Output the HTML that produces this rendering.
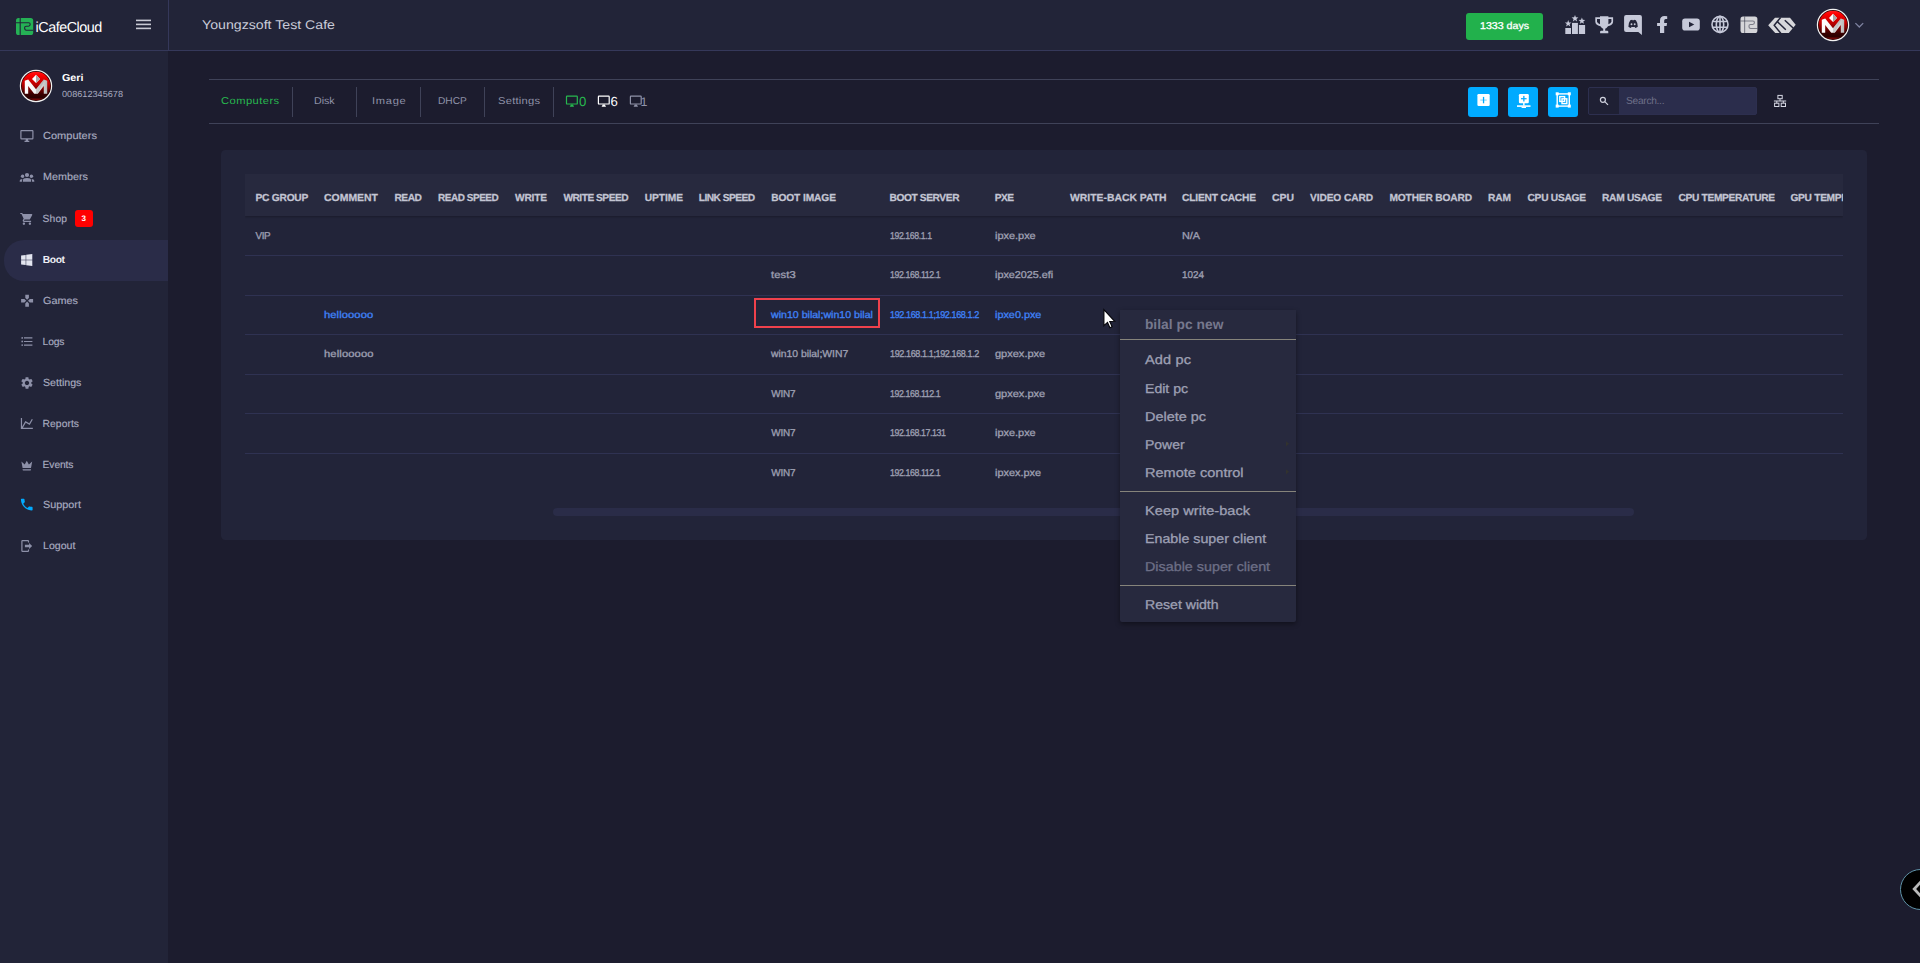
<!DOCTYPE html>
<html lang="en">
<head>
<meta charset="utf-8">
<title>iCafeCloud - Boot</title>
<style>
html,body{margin:0;padding:0;}
body{width:1920px;height:963px;overflow:hidden;background:#1c1c2e;font-family:"Liberation Sans",sans-serif;position:relative;}
.abs{position:absolute;}
.t{position:absolute;white-space:pre;text-rendering:geometricPrecision;height:20px;line-height:20px;font-family:"Liberation Sans",sans-serif;}
#header{position:absolute;left:0;top:0;width:1920px;height:50px;background:#222438;border-bottom:1px solid #35385a;}
#sidebar{position:absolute;left:0;top:51px;width:168px;height:912px;background:#222438;}
#hsep{position:absolute;left:168px;top:0;width:1px;height:50px;background:#35385a;}
#active{position:absolute;left:4px;top:240px;width:164px;height:41px;background:#2a2c48;border-radius:20px 0 0 20px;}
#days{position:absolute;left:1466px;top:13px;width:77px;height:27px;background:#22b14c;border-radius:3px;}
.badge{position:absolute;left:75px;top:210px;width:18px;height:17px;background:#ff0000;border-radius:3px;}
.hline{position:absolute;left:209px;width:1670px;height:1px;background:#3f4258;}
.vsep{position:absolute;top:87px;width:1px;height:30px;background:#3f4258;}
.cbtn{position:absolute;top:87px;width:30px;height:30px;background:#00aaff;border-radius:3px;}
#search{position:absolute;left:1588px;top:87px;width:169px;height:28px;border-radius:2px;background:#2b2d4c;overflow:hidden;box-sizing:border-box;border:1px solid #2d2f4f;}
#search .ic{position:absolute;left:0;top:0;width:30px;height:26px;background:#1f2034;}
#card{position:absolute;left:221px;top:150px;width:1646px;height:390px;background:#222439;border-radius:4.5px;}
#tablewrap{position:absolute;left:245px;top:174px;width:1598px;height:320px;overflow:hidden;}
#thead{position:absolute;left:0;top:0;width:1598px;height:42px;background:#27293e;box-shadow:0 1px 2px rgba(0,0,0,.25);}
.rl{position:absolute;left:0;width:1598px;height:1px;background:#2f3252;}
#selbox{position:absolute;left:754px;top:298px;width:126px;height:30px;box-sizing:border-box;border:2px solid #ef414c;}
#scroll{position:absolute;left:553px;top:508px;width:1081px;height:8px;border-radius:4px;background:#2a2c48;}
#menu{position:absolute;left:1120px;top:310px;width:176px;height:312px;background:#27293e;box-shadow:0 2px 5px rgba(0,0,0,.42);border-radius:0 0 2px 2px;}
.msep{position:absolute;left:0;width:176px;height:1px;background:#86847b;}
#fab{position:absolute;left:1899.5px;top:868.6px;width:41px;height:41px;border-radius:21px;background:#000;box-sizing:border-box;border:1px solid #5f93a8;}
svg{position:absolute;overflow:visible;}
</style>
</head>
<body>
<div id="header"></div>
<div id="hsep"></div>
<div id="sidebar"></div>
<div id="active"></div>
<div id="days"></div>
<div class="badge"></div>

<div class="hline" style="top:79px"></div>
<div class="hline" style="top:123px"></div>
<div class="vsep" style="left:292px"></div>
<div class="vsep" style="left:356px"></div>
<div class="vsep" style="left:420px"></div>
<div class="vsep" style="left:484px"></div>
<div class="vsep" style="left:553px"></div>
<div class="cbtn" style="left:1468px"></div>
<div class="cbtn" style="left:1508px"></div>
<div class="cbtn" style="left:1548px"></div>
<div id="search"><div class="ic"></div></div>
<div id="card"></div>
<div id="tablewrap">
 <div id="thead">
<div class="t" style="left:10.50px;top:15.00px;font-size:10.2px;font-weight:700;color:#c3c5d3;letter-spacing:-0.221px;-webkit-text-stroke:0.25px currentColor;">PC GROUP</div>
<div class="t" style="left:79.40px;top:15.00px;font-size:10.2px;font-weight:700;color:#c3c5d3;letter-spacing:0.000px;transform:scaleX(1.0258);transform-origin:0 50%;-webkit-text-stroke:0.25px currentColor;">COMMENT</div>
<div class="t" style="left:149.40px;top:15.00px;font-size:10.2px;font-weight:700;color:#c3c5d3;letter-spacing:-0.425px;-webkit-text-stroke:0.25px currentColor;">READ</div>
<div class="t" style="left:193.00px;top:15.00px;font-size:10.2px;font-weight:700;color:#c3c5d3;letter-spacing:-0.450px;transform:scaleX(0.9761);transform-origin:0 50%;-webkit-text-stroke:0.25px currentColor;">READ SPEED</div>
<div class="t" style="left:270.00px;top:15.00px;font-size:10.2px;font-weight:700;color:#c3c5d3;letter-spacing:-0.207px;-webkit-text-stroke:0.25px currentColor;">WRITE</div>
<div class="t" style="left:318.40px;top:15.00px;font-size:10.2px;font-weight:700;color:#c3c5d3;letter-spacing:-0.500px;-webkit-text-stroke:0.25px currentColor;">WRITE SPEED</div>
<div class="t" style="left:399.70px;top:15.00px;font-size:10.2px;font-weight:700;color:#c3c5d3;letter-spacing:-0.040px;-webkit-text-stroke:0.25px currentColor;">UPTIME</div>
<div class="t" style="left:453.70px;top:15.00px;font-size:10.2px;font-weight:700;color:#c3c5d3;letter-spacing:-0.516px;-webkit-text-stroke:0.25px currentColor;">LINK SPEED</div>
<div class="t" style="left:526.20px;top:15.00px;font-size:10.2px;font-weight:700;color:#c3c5d3;letter-spacing:-0.095px;-webkit-text-stroke:0.25px currentColor;">BOOT IMAGE</div>
<div class="t" style="left:644.50px;top:15.00px;font-size:10.2px;font-weight:700;color:#c3c5d3;letter-spacing:-0.397px;-webkit-text-stroke:0.25px currentColor;">BOOT SERVER</div>
<div class="t" style="left:749.80px;top:15.00px;font-size:10.2px;font-weight:700;color:#c3c5d3;letter-spacing:-0.595px;-webkit-text-stroke:0.25px currentColor;">PXE</div>
<div class="t" style="left:824.50px;top:15.00px;font-size:10.2px;font-weight:700;color:#c3c5d3;letter-spacing:0.000px;transform:scaleX(1.0190);transform-origin:0 50%;-webkit-text-stroke:0.25px currentColor;">WRITE-BACK PATH</div>
<div class="t" style="left:937.00px;top:15.00px;font-size:10.2px;font-weight:700;color:#c3c5d3;letter-spacing:-0.168px;-webkit-text-stroke:0.25px currentColor;">CLIENT CACHE</div>
<div class="t" style="left:1027.00px;top:15.00px;font-size:10.2px;font-weight:700;color:#c3c5d3;letter-spacing:0.000px;transform:scaleX(1.0225);transform-origin:0 50%;-webkit-text-stroke:0.25px currentColor;">CPU</div>
<div class="t" style="left:1065.00px;top:15.00px;font-size:10.2px;font-weight:700;color:#c3c5d3;letter-spacing:-0.108px;-webkit-text-stroke:0.25px currentColor;">VIDEO CARD</div>
<div class="t" style="left:1144.50px;top:15.00px;font-size:10.2px;font-weight:700;color:#c3c5d3;letter-spacing:-0.166px;-webkit-text-stroke:0.25px currentColor;">MOTHER BOARD</div>
<div class="t" style="left:1243.00px;top:15.00px;font-size:10.2px;font-weight:700;color:#c3c5d3;letter-spacing:-0.102px;-webkit-text-stroke:0.25px currentColor;">RAM</div>
<div class="t" style="left:1282.50px;top:15.00px;font-size:10.2px;font-weight:700;color:#c3c5d3;letter-spacing:-0.260px;-webkit-text-stroke:0.25px currentColor;">CPU USAGE</div>
<div class="t" style="left:1357.00px;top:15.00px;font-size:10.2px;font-weight:700;color:#c3c5d3;letter-spacing:-0.283px;-webkit-text-stroke:0.25px currentColor;">RAM USAGE</div>
<div class="t" style="left:1433.50px;top:15.00px;font-size:10.2px;font-weight:700;color:#c3c5d3;letter-spacing:-0.330px;-webkit-text-stroke:0.25px currentColor;">CPU TEMPERATURE</div>
<div class="t" style="left:1545.50px;top:15.00px;font-size:10.2px;font-weight:700;color:#c3c5d3;letter-spacing:-0.300px;-webkit-text-stroke:0.25px currentColor;">GPU TEMPERATURE</div>
 </div>
 <div class="rl" style="top:81px"></div>
 <div class="rl" style="top:121px"></div>
 <div class="rl" style="top:160px"></div>
 <div class="rl" style="top:200px"></div>
 <div class="rl" style="top:239px"></div>
 <div class="rl" style="top:279px"></div>
<div class="t" style="left:10.50px;top:53.00px;font-size:9.9px;font-weight:400;color:#9c9eb0;letter-spacing:-0.461px;-webkit-text-stroke:0.35px currentColor;">VIP</div>
<div class="t" style="left:644.50px;top:53.00px;font-size:9.9px;font-weight:400;color:#9c9eb0;letter-spacing:-0.450px;transform:scaleX(0.8810);transform-origin:0 50%;-webkit-text-stroke:0.35px currentColor;">192.168.1.1</div>
<div class="t" style="left:749.80px;top:53.00px;font-size:9.9px;font-weight:400;color:#9c9eb0;letter-spacing:0.000px;transform:scaleX(1.1065);transform-origin:0 50%;-webkit-text-stroke:0.35px currentColor;">ipxe.pxe</div>
<div class="t" style="left:937.00px;top:53.00px;font-size:9.9px;font-weight:400;color:#9c9eb0;letter-spacing:0.000px;transform:scaleX(1.0930);transform-origin:0 50%;-webkit-text-stroke:0.35px currentColor;">N/A</div>
<div class="t" style="left:526.30px;top:92.00px;font-size:9.9px;font-weight:400;color:#9c9eb0;letter-spacing:0.109px;transform:scaleX(1.1300);transform-origin:0 50%;-webkit-text-stroke:0.35px currentColor;">test3</div>
<div class="t" style="left:644.50px;top:92.00px;font-size:9.9px;font-weight:400;color:#9c9eb0;letter-spacing:-0.450px;transform:scaleX(0.8891);transform-origin:0 50%;-webkit-text-stroke:0.35px currentColor;">192.168.112.1</div>
<div class="t" style="left:749.80px;top:92.00px;font-size:9.9px;font-weight:400;color:#9c9eb0;letter-spacing:0.000px;transform:scaleX(1.0926);transform-origin:0 50%;-webkit-text-stroke:0.35px currentColor;">ipxe2025.efi</div>
<div class="t" style="left:937.00px;top:92.00px;font-size:9.9px;font-weight:400;color:#9c9eb0;letter-spacing:0.010px;-webkit-text-stroke:0.35px currentColor;">1024</div>
<div class="t" style="left:79.30px;top:132.00px;font-size:9.9px;font-weight:400;color:#3f80f4;letter-spacing:0.087px;transform:scaleX(1.1300);transform-origin:0 50%;-webkit-text-stroke:0.35px currentColor;">hellooooo</div>
<div class="t" style="left:526.30px;top:132.00px;font-size:9.9px;font-weight:400;color:#3f80f4;letter-spacing:0.000px;transform:scaleX(1.0730);transform-origin:0 50%;-webkit-text-stroke:0.35px currentColor;">win10 bilal;win10 bilal</div>
<div class="t" style="left:644.50px;top:132.00px;font-size:9.9px;font-weight:400;color:#3f80f4;letter-spacing:-0.450px;transform:scaleX(0.9189);transform-origin:0 50%;-webkit-text-stroke:0.35px currentColor;">192.168.1.1;192.168.1.2</div>
<div class="t" style="left:749.80px;top:132.00px;font-size:9.9px;font-weight:400;color:#3f80f4;letter-spacing:0.000px;transform:scaleX(1.0974);transform-origin:0 50%;-webkit-text-stroke:0.35px currentColor;">ipxe0.pxe</div>
<div class="t" style="left:79.30px;top:171.00px;font-size:9.9px;font-weight:400;color:#9c9eb0;letter-spacing:0.120px;transform:scaleX(1.1300);transform-origin:0 50%;-webkit-text-stroke:0.35px currentColor;">hellooooo</div>
<div class="t" style="left:526.30px;top:171.00px;font-size:9.9px;font-weight:400;color:#9c9eb0;letter-spacing:-0.000px;transform:scaleX(1.0497);transform-origin:0 50%;-webkit-text-stroke:0.35px currentColor;">win10 bilal;WIN7</div>
<div class="t" style="left:644.50px;top:171.00px;font-size:9.9px;font-weight:400;color:#9c9eb0;letter-spacing:-0.450px;transform:scaleX(0.9189);transform-origin:0 50%;-webkit-text-stroke:0.35px currentColor;">192.168.1.1;192.168.1.2</div>
<div class="t" style="left:749.80px;top:171.00px;font-size:9.9px;font-weight:400;color:#9c9eb0;letter-spacing:0.000px;transform:scaleX(1.1148);transform-origin:0 50%;-webkit-text-stroke:0.35px currentColor;">gpxex.pxe</div>
<div class="t" style="left:526.30px;top:211.00px;font-size:9.9px;font-weight:400;color:#9c9eb0;letter-spacing:-0.162px;-webkit-text-stroke:0.35px currentColor;">WIN7</div>
<div class="t" style="left:644.50px;top:211.00px;font-size:9.9px;font-weight:400;color:#9c9eb0;letter-spacing:-0.450px;transform:scaleX(0.8891);transform-origin:0 50%;-webkit-text-stroke:0.35px currentColor;">192.168.112.1</div>
<div class="t" style="left:749.80px;top:211.00px;font-size:9.9px;font-weight:400;color:#9c9eb0;letter-spacing:0.000px;transform:scaleX(1.1148);transform-origin:0 50%;-webkit-text-stroke:0.35px currentColor;">gpxex.pxe</div>
<div class="t" style="left:526.30px;top:250.00px;font-size:9.9px;font-weight:400;color:#9c9eb0;letter-spacing:-0.162px;-webkit-text-stroke:0.35px currentColor;">WIN7</div>
<div class="t" style="left:644.50px;top:250.00px;font-size:9.9px;font-weight:400;color:#9c9eb0;letter-spacing:-0.450px;transform:scaleX(0.8916);transform-origin:0 50%;-webkit-text-stroke:0.35px currentColor;">192.168.17.131</div>
<div class="t" style="left:749.80px;top:250.00px;font-size:9.9px;font-weight:400;color:#9c9eb0;letter-spacing:0.000px;transform:scaleX(1.1065);transform-origin:0 50%;-webkit-text-stroke:0.35px currentColor;">ipxe.pxe</div>
<div class="t" style="left:526.30px;top:290.00px;font-size:9.9px;font-weight:400;color:#9c9eb0;letter-spacing:-0.162px;-webkit-text-stroke:0.35px currentColor;">WIN7</div>
<div class="t" style="left:644.50px;top:290.00px;font-size:9.9px;font-weight:400;color:#9c9eb0;letter-spacing:-0.450px;transform:scaleX(0.8891);transform-origin:0 50%;-webkit-text-stroke:0.35px currentColor;">192.168.112.1</div>
<div class="t" style="left:749.80px;top:290.00px;font-size:9.9px;font-weight:400;color:#9c9eb0;letter-spacing:0.000px;transform:scaleX(1.1026);transform-origin:0 50%;-webkit-text-stroke:0.35px currentColor;">ipxex.pxe</div>
</div>
<div id="selbox"></div>
<div id="scroll"></div>
<div class="t" style="left:201.50px;top:15.00px;font-size:12.6px;font-weight:400;color:#c9cbd8;letter-spacing:0.000px;transform:scaleX(1.1240);transform-origin:0 50%;">Youngzsoft Test Cafe</div>
<div class="t" style="left:1480.00px;top:17.00px;font-size:9.9px;font-weight:400;color:#ffffff;letter-spacing:0.000px;transform:scaleX(1.0751);transform-origin:0 50%;-webkit-text-stroke:0.3px currentColor;">1333 days</div>
<div class="t" style="left:35.60px;top:18.00px;font-size:14.4px;font-weight:400;color:#ffffff;letter-spacing:-0.511px;">iCafeCloud</div>
<div class="t" style="left:61.50px;top:69.00px;font-size:10.2px;font-weight:700;color:#ffffff;letter-spacing:0.000px;transform:scaleX(1.0544);transform-origin:0 50%;">Geri</div>
<div class="t" style="left:61.50px;top:84.00px;font-size:8.8px;font-weight:400;color:#a9acc0;letter-spacing:-0.000px;transform:scaleX(1.0389);transform-origin:0 50%;">008612345678</div>
<div class="t" style="left:42.60px;top:127.00px;font-size:10.3px;font-weight:400;color:#a9acc0;letter-spacing:0.000px;transform:scaleX(1.0703);transform-origin:0 50%;-webkit-text-stroke:0.15px currentColor;">Computers</div>
<div class="t" style="left:42.60px;top:168.00px;font-size:10.3px;font-weight:400;color:#a9acc0;letter-spacing:0.000px;transform:scaleX(1.0461);transform-origin:0 50%;-webkit-text-stroke:0.15px currentColor;">Members</div>
<div class="t" style="left:42.60px;top:210.00px;font-size:10.3px;font-weight:400;color:#a9acc0;letter-spacing:0.112px;-webkit-text-stroke:0.15px currentColor;">Shop</div>
<div class="t" style="left:42.70px;top:251.00px;font-size:10.3px;font-weight:700;color:#eeeff5;letter-spacing:-0.384px;">Boot</div>
<div class="t" style="left:42.60px;top:292.00px;font-size:10.3px;font-weight:400;color:#a9acc0;letter-spacing:0.000px;transform:scaleX(1.0511);transform-origin:0 50%;-webkit-text-stroke:0.15px currentColor;">Games</div>
<div class="t" style="left:42.60px;top:333.00px;font-size:10.3px;font-weight:400;color:#a9acc0;letter-spacing:-0.148px;-webkit-text-stroke:0.15px currentColor;">Logs</div>
<div class="t" style="left:42.60px;top:374.00px;font-size:10.3px;font-weight:400;color:#a9acc0;letter-spacing:0.000px;transform:scaleX(1.0317);transform-origin:0 50%;-webkit-text-stroke:0.15px currentColor;">Settings</div>
<div class="t" style="left:42.60px;top:415.00px;font-size:10.3px;font-weight:400;color:#a9acc0;letter-spacing:0.056px;-webkit-text-stroke:0.15px currentColor;">Reports</div>
<div class="t" style="left:42.60px;top:456.00px;font-size:10.3px;font-weight:400;color:#a9acc0;letter-spacing:-0.117px;-webkit-text-stroke:0.15px currentColor;">Events</div>
<div class="t" style="left:42.60px;top:496.00px;font-size:10.3px;font-weight:400;color:#a9acc0;letter-spacing:0.000px;transform:scaleX(1.0505);transform-origin:0 50%;-webkit-text-stroke:0.15px currentColor;">Support</div>
<div class="t" style="left:42.60px;top:537.00px;font-size:10.3px;font-weight:400;color:#a9acc0;letter-spacing:0.000px;transform:scaleX(1.0286);transform-origin:0 50%;-webkit-text-stroke:0.15px currentColor;">Logout</div>
<div class="t" style="left:81.60px;top:209.00px;font-size:8px;font-weight:700;color:#ffffff;letter-spacing:0.000px;">3</div>
<div class="t" style="left:221.00px;top:92.00px;font-size:9.9px;font-weight:400;color:#27b84f;letter-spacing:0.401px;transform:scaleX(1.1300);transform-origin:0 50%;">Computers</div>
<div class="t" style="left:314.30px;top:92.00px;font-size:9.9px;font-weight:400;color:#8f92a8;letter-spacing:0.000px;transform:scaleX(1.0779);transform-origin:0 50%;">Disk</div>
<div class="t" style="left:371.50px;top:92.00px;font-size:9.9px;font-weight:400;color:#8f92a8;letter-spacing:0.615px;transform:scaleX(1.1300);transform-origin:0 50%;">Image</div>
<div class="t" style="left:438.30px;top:92.00px;font-size:9.9px;font-weight:400;color:#8f92a8;letter-spacing:0.000px;transform:scaleX(1.0327);transform-origin:0 50%;">DHCP</div>
<div class="t" style="left:497.70px;top:92.00px;font-size:9.9px;font-weight:400;color:#8f92a8;letter-spacing:0.224px;transform:scaleX(1.1300);transform-origin:0 50%;">Settings</div>
<div class="t" style="left:579.00px;top:92.00px;font-size:13.2px;font-weight:400;color:#27b84f;letter-spacing:0.000px;">0</div>
<div class="t" style="left:610.60px;top:92.00px;font-size:13.2px;font-weight:400;color:#ffffff;letter-spacing:0.000px;">6</div>
<div class="t" style="left:640.60px;top:92.00px;font-size:12.5px;font-weight:400;color:#8f92a8;letter-spacing:0.000px;">1</div>
<div class="t" style="left:1626.00px;top:92.00px;font-size:10.2px;font-weight:400;color:#6e7089;letter-spacing:-0.285px;">Search...</div>
<svg width="1920" height="963" viewBox="0 0 1920 963" style="left:0;top:0;pointer-events:none"><g transform="translate(16.00 18.00) scale(1.0000)"><rect x="0" y="0" width="17.2" height="17" rx="2.6" fill="#25b155"/><g fill="none" stroke="#222438" stroke-width="1.1" stroke-opacity="1.0"><path d="M4.2 0V17"/><path d="M0 4.7H12.6Q14.2 4.7 14.2 6.3Q14.2 8.2 12.4 8.2H10.2Q8.6 8.2 8.6 9.8Q8.6 12.3 10.4 12.3H17.2"/></g></g>
<g fill="#c9cad4"><rect x="136" y="19.6" width="15" height="1.6"/><rect x="136" y="23.6" width="15" height="1.6"/><rect x="136" y="27.6" width="15" height="1.6"/></g>
<defs>
<linearGradient id="ball" x1="0" y1="0" x2="0" y2="1">
<stop offset="0" stop-color="#ff1a1a"/><stop offset="0.12" stop-color="#ff0000"/><stop offset="0.45" stop-color="#b80000"/><stop offset="0.78" stop-color="#3a0000"/><stop offset="0.9" stop-color="#2a0000"/><stop offset="1" stop-color="#8a0808"/>
</linearGradient>
<linearGradient id="silver" x1="0" y1="0" x2="1" y2="0">
<stop offset="0" stop-color="#ffffff"/><stop offset="0.5" stop-color="#f2f2f2"/><stop offset="1" stop-color="#b9b9b9"/>
</linearGradient>
</defs>
<g transform="translate(36 86)">
<circle r="15.6" fill="#2a0505" stroke="#f2f2f2" stroke-width="1.2"/>
<circle r="14.3" fill="url(#ball)"/>
<polygon points="-11.2,-5.2 -7.8,-6.5 0,3.3 7.8,-6.5 11.2,-5.2 11.2,7.7 7.8,7.7 7.8,0.1 1.8,7.7 -1.8,7.7 -7.8,0.1 -7.8,7.7 -11.2,7.7" fill="url(#silver)"/><polygon points="0,3.3 7.8,-6.5 8.6,-6.2 1.8,7.7 0,7.7" fill="#8c8c8c" opacity="0.35"/>
<polygon points="0,-11.2 4,-6.9 0,-3 -4,-6.9" fill="#ffffff"/>
<polygon points="0,-11.2 4,-6.9 0,-3" fill="#a9a9a9"/>
</g>
<g transform="translate(1833 25)">
<circle r="15.6" fill="#2a0505" stroke="#f2f2f2" stroke-width="1.2"/>
<circle r="14.3" fill="url(#ball)"/>
<polygon points="-11.2,-5.2 -7.8,-6.5 0,3.3 7.8,-6.5 11.2,-5.2 11.2,7.7 7.8,7.7 7.8,0.1 1.8,7.7 -1.8,7.7 -7.8,0.1 -7.8,7.7 -11.2,7.7" fill="url(#silver)"/><polygon points="0,3.3 7.8,-6.5 8.6,-6.2 1.8,7.7 0,7.7" fill="#8c8c8c" opacity="0.35"/>
<polygon points="0,-11.2 4,-6.9 0,-3 -4,-6.9" fill="#ffffff"/>
<polygon points="0,-11.2 4,-6.9 0,-3" fill="#a9a9a9"/>
</g>
<path d="M1855.4 23.1L1859.3 27L1863.2 23.1" fill="none" stroke="#7e82a0" stroke-width="1.3"/>
<path transform="translate(19.70 128.75) scale(0.6000)" d="M21,16H3V4H21M21,2H3C1.89,2 1,2.89 1,4V16A2,2 0 0,0 3,18H10V20H8V22H16V20H14V18H21A2,2 0 0,0 23,16V4C23,2.89 22.1,2 21,2Z" fill="#8d90a8" />
<g fill="#8d90a8"><circle cx="22.6" cy="176.2" r="1.75"/><circle cx="31.4" cy="176.2" r="1.75"/><circle cx="27" cy="175" r="2.75" fill="#222438"/><circle cx="27" cy="175" r="2.1"/><path d="M22.9 181.75V180.4Q22.9 178.1 27 178.1Q31.1 178.1 31.1 180.4V181.75Z"/><path d="M19.7 181.75V180.7Q19.7 179.1 22.5 179Q21.9 179.8 21.9 181.75Z"/><path d="M34.3 181.75V180.7Q34.3 179.1 31.5 179Q32.1 179.8 32.1 181.75Z"/></g>
<path transform="translate(19.70 211.70) scale(0.6000)" d="M7 18c-1.1 0-1.99.9-1.99 2S5.900 22 7 22s2-.9 2-2-.9-2-2-2zM1 2v2h2l3.600 7.590-1.350 2.450c-.16.28-.25.61-.25.96 0 1.100.9 2 2 2h12v-2H7.420c-.14 0-.25-.11-.25-.25l.03-.12.9-1.630h7.450c.75 0 1.410-.41 1.750-1.030l3.580-6.490c.08-.14.12-.31.12-.48 0-.55-.45-1-1-1H5.210l-.94-2H1zm16 16c-1.100 0-1.990.9-1.990 2s.89 2 1.990 2 2-.9 2-2-.9-2-2-2z" fill="#8d90a8" />
<g fill="#e3e5f0"><polygon points="21.1,255.6 25.7,254.9 25.7,259.75 21.1,259.75"/><polygon points="26.2,254.83 32.3,253.9 32.3,259.75 26.2,259.75"/><polygon points="21.1,260.25 25.7,260.25 25.7,265.1 21.1,264.4"/><polygon points="26.2,260.25 32.3,260.25 32.3,266.1 26.2,265.17"/></g>
<path transform="translate(19.90 293.50) scale(0.6000)" d="M15 7.5V2H9v5.500l3 3 3-3zM7.500 9H2v6h5.500l3-3-3-3zM9 16.500V22h6v-5.500l-3-3-3 3zM16.500 9l-3 3 3 3H22V9h-5.500z" fill="#8d90a8" />
<path transform="translate(19.80 334.30) scale(0.6000)" d="M4 10.500c-.83 0-1.500.67-1.500 1.500s.67 1.500 1.500 1.500 1.500-.67 1.500-1.500-.67-1.500-1.500-1.500zm0-6c-.83 0-1.500.67-1.500 1.500S3.170 7.500 4 7.500 5.500 6.830 5.500 6 4.830 4.500 4 4.500zm0 12c-.83 0-1.500.68-1.500 1.500s.68 1.500 1.500 1.500 1.500-.68 1.500-1.500-.67-1.500-1.500-1.500zM7 19h14v-2H7v2zm0-6h14v-2H7v2zm0-8v2h14V5H7z" fill="#8d90a8" />
<path transform="translate(19.80 375.70) scale(0.6000)" d="M19.140 12.940c.04-.3.06-.61.06-.94 0-.32-.02-.64-.07-.94l2.030-1.580c.18-.14.23-.41.12-.61l-1.920-3.320c-.12-.22-.37-.29-.59-.22l-2.390.96c-.5-.38-1.030-.7-1.620-.94l-.36-2.540c-.04-.24-.24-.41-.48-.41h-3.840c-.24 0-.43.17-.47.41l-.36 2.540c-.59.24-1.130.57-1.620.94l-2.390-.96c-.22-.08-.47 0-.59.22L2.740 8.870c-.12.21-.08.47.12.61l2.030 1.580c-.05.3-.09.63-.09.94s.02.64.07.94l-2.030 1.580c-.18.14-.23.41-.12.61l1.920 3.320c.12.22.37.29.59.22l2.390-.96c.5.38 1.030.7 1.620.94l.36 2.540c.05.24.24.41.48.41h3.840c.24 0 .44-.17.47-.41l.36-2.540c.59-.24 1.130-.56 1.620-.94l2.390.96c.22.08.47 0 .59-.22l1.920-3.320c.12-.22.07-.47-.12-.61l-2.010-1.580zM12 15.600c-1.980 0-3.600-1.620-3.600-3.600s1.620-3.600 3.600-3.600 3.600 1.620 3.600 3.600-1.620 3.600-3.600 3.600z" fill="#8d90a8" />
<path transform="translate(19.65 416.30) scale(0.6000)" d="M16,11.78L20.24,4.45L21.97,5.45L16.74,14.5L10.23,10.75L5.46,19H22V21H2V3H4V17.54L9.5,8L16,11.78Z" fill="#8d90a8" />
<path transform="translate(19.60 458.40) scale(0.6000)" d="M5,16L3,5L8.500,10L12,4L15.500,10L21,5L19,16H5M19,19A1,1 0 0,1 18,20H6A1,1 0 0,1 5,19V18H19V19Z" fill="#8d90a8" />
<path transform="translate(18.95 496.75) scale(0.6500)" d="M6.620 10.790c1.440 2.830 3.760 5.140 6.590 6.590l2.200-2.200c.27-.27.67-.36 1.020-.24 1.120.37 2.330.57 3.570.57.55 0 1 .45 1 1V20c0 .55-.45 1-1 1-9.390 0-17-7.610-17-17 0-.55.45-1 1-1h3.500c.55 0 1 .45 1 1 0 1.250.2 2.450.57 3.570.11.35.03.74-.25 1.020l-2.200 2.200z" fill="#00aaff" />
<path transform="translate(19.50 538.80) scale(0.6000)" d="M16,17V14H9V10H16V7L21,12L16,17M14,2A2,2 0 0,1 16,4V6H14V4H5V20H14V18H16V20A2,2 0 0,1 14,22H5A2,2 0 0,1 3,20V4A2,2 0 0,1 5,2H14Z" fill="#8d90a8" />
<g fill="#c6c9d9"><rect x="1565.3" y="28" width="5.7" height="6"/><rect x="1572" y="22.9" width="5.9" height="11.1"/><rect x="1578.9" y="25" width="6.2" height="9"/><polygon points="1568.20,20.10 1569.06,22.41 1571.53,22.52 1569.60,24.05 1570.26,26.43 1568.20,25.07 1566.14,26.43 1566.80,24.05 1564.87,22.52 1567.34,22.41"/><polygon points="1575.00,14.90 1575.89,17.28 1578.42,17.39 1576.44,18.97 1577.12,21.41 1575.00,20.01 1572.88,21.41 1573.56,18.97 1571.58,17.39 1574.11,17.28"/><polygon points="1581.90,17.50 1582.76,19.81 1585.23,19.92 1583.30,21.45 1583.96,23.83 1581.90,22.47 1579.84,23.83 1580.50,21.45 1578.57,19.92 1581.04,19.81"/></g>
<g fill="#c6c9d9"><path d="M1600 16.2H1608.4V17.2H1613.1V21.5Q1613.1 25.2 1608 26.2Q1606.4 28.2 1605.2 28.7V30.8H1607.3Q1608.3 30.8 1608.3 31.8V33.3H1600.1V31.8Q1600.1 30.8 1601.1 30.8H1603.2V28.7Q1602 28.2 1600.4 26.2Q1595.3 25.2 1595.3 21.5V17.2H1600Z"/></g>
<g fill="#222438"><path d="M1597 18.9H1600V24.2Q1597 23.4 1597 21.3Z"/><path d="M1611.4 18.9H1608.4V24.2Q1611.4 23.4 1611.4 21.3Z"/></g>
<path fill="#c6c9d9" d="M1626.1 15H1639.9Q1641.9 15 1641.9 17V35L1638.3 32.1H1626.1Q1624.1 32.1 1624.1 30.1V17Q1624.1 15 1626.1 15Z"/>
<path fill="#222438" d="M1630.3 20.3Q1631.6 19.7 1632.2 19.8L1632.4 20.3H1633.8L1634 19.8Q1634.7 19.7 1635.9 20.3Q1638 23.2 1637.8 26.7Q1636.6 27.7 1635.3 27.9L1634.7 27Q1635.3 26.8 1635.7 26.5Q1633.1 27.6 1630.5 26.5Q1630.9 26.8 1631.5 27L1630.9 27.9Q1629.6 27.7 1628.4 26.7Q1628.2 23.2 1630.3 20.3Z"/>
<g fill="#c6c9d9"><ellipse cx="1631.5" cy="24.3" rx="0.95" ry="1.05"/><ellipse cx="1634.7" cy="24.3" rx="0.95" ry="1.05"/></g>
<path fill="#c6c9d9" d="M1660 33.1V26H1657.1V23H1660V20.6Q1660 16 1664.6 16Q1666 16 1667.2 16.2V19H1665.7Q1664.2 19 1664.2 20.6V23H1667.1L1666.6 26H1664.2V33.1Z"/>
<rect x="1682.2" y="18.5" width="17.6" height="12" rx="2.8" fill="#c6c9d9"/><polygon points="1689,21.8 1694.3,24.5 1689,27.2" fill="#222438"/>
<g fill="none" stroke="#c6c9d9" stroke-width="1.6"><circle cx="1720" cy="24.4" r="8"/><ellipse cx="1720" cy="24.4" rx="3.7" ry="8"/><path d="M1720 16.4V32.4M1712.4 21.5H1727.6M1712.4 27.3H1727.6"/></g>
<g transform="translate(1740.50 16.40) scale(0.9824)"><rect x="0" y="0" width="17.2" height="17" rx="2.6" fill="#d5d5d9"/><g fill="none" stroke="#222438" stroke-width="1.1" stroke-opacity="0.5"><path d="M4.2 0V17"/><path d="M0 4.7H12.6Q14.2 4.7 14.2 6.3Q14.2 8.2 12.4 8.2H10.2Q8.6 8.2 8.6 9.8Q8.6 12.3 10.4 12.3H17.2"/></g></g>
<polygon points="1768.2,25.2 1775,17.7 1790,17.7 1795.7,24.7 1788.8,33.1 1775.2,33.1" fill="#d7d7db"/>
<g fill="none" stroke="#222438" stroke-width="1.5"><path d="M1780.6 17.5L1774.2 25.2L1780.8 33.3"/><path d="M1777.4 21.6L1785.8 29.8"/><path d="M1784.8 20.3L1793.4 28.3"/></g>
<g><rect x="566.50" y="96.20" width="10.8" height="7.8" rx="0.6" fill="none" stroke="#27b84f" stroke-width="1.2"/><polygon points="570.90,104.60 572.90,104.60 574.10,106.80 569.70,106.80" fill="#27b84f"/></g>
<g><rect x="598.40" y="96.20" width="10.8" height="7.8" rx="0.6" fill="none" stroke="#ffffff" stroke-width="1.2"/><polygon points="602.80,104.60 604.80,104.60 606.00,106.80 601.60,106.80" fill="#ffffff"/></g>
<g><rect x="630.40" y="96.20" width="10.8" height="7.8" rx="0.6" fill="none" stroke="#8f92a8" stroke-width="1.2"/><polygon points="634.80,104.60 636.80,104.60 638.00,106.80 633.60,106.80" fill="#8f92a8"/></g>
<rect x="1477.4" y="94.1" width="12.3" height="11.8" rx="1.2" fill="#ffffff"/><rect x="1482.9" y="96.9" width="1.3" height="6.4" fill="#00aaff"/><rect x="1480.3" y="99.5" width="6.4" height="1.2" fill="#00aaff" opacity="0.45"/>
<rect x="1518.9" y="94.1" width="9.9" height="9.2" rx="1.2" fill="#ffffff"/><rect x="1523.2" y="95.9" width="1.3" height="5.6" fill="#00aaff"/><rect x="1521" y="98.1" width="5.6" height="1.2" fill="#00aaff"/><rect x="1523.1" y="103" width="1.5" height="2.6" fill="#ffffff"/><rect x="1517" y="105.3" width="13.5" height="1.6" fill="#ffffff"/><rect x="1521.6" y="106.8" width="4.4" height="1.2" fill="#ffffff"/>
<g fill="none" stroke="#ffffff" stroke-width="1.4"><rect x="1557.2" y="93.9" width="12.1" height="12.2"/><rect x="1559.8" y="96.6" width="4.8" height="4.8"/><rect x="1562" y="98.8" width="4.8" height="4.8"/></g><g fill="#ffffff"><rect x="1555.7" y="92.3" width="3" height="3"/><rect x="1567.8" y="92.3" width="3" height="3"/><rect x="1555.7" y="104.6" width="3" height="3"/><rect x="1567.8" y="104.6" width="3" height="3"/></g>
<g fill="none" stroke="#cfd1dd" stroke-width="1.2"><circle cx="1602.9" cy="99.8" r="2.5"/><path d="M1604.8 101.7L1608 104.9"/></g>
<g fill="none" stroke="#d6d8e4" stroke-width="1.0"><rect x="1777.9" y="95.4" width="4.3" height="3.3"/><rect x="1774.6" y="103.2" width="4.3" height="3.3"/><rect x="1781.2" y="103.2" width="4.3" height="3.3"/><path d="M1780 98.8V101M1773.9 101H1786.2M1776.8 101V103.2M1783.3 101V103.2"/></g></svg>
<div id="menu">
 <div class="msep" style="top:29px"></div>
 <div class="msep" style="top:181px"></div>
 <div class="msep" style="top:275px"></div>
 <svg width="4" height="6" viewBox="0 0 4 6" style="left:166px;top:131.3px"><polygon points="0,0.2 3,2.8 0,5.4" fill="#32322f"/></svg>
 <svg width="4" height="6" viewBox="0 0 4 6" style="left:166px;top:159.3px"><polygon points="0,0.2 3,2.8 0,5.4" fill="#32322f"/></svg>
<div class="t" style="left:24.90px;top:5.00px;font-size:13.8px;font-weight:700;color:#76788d;letter-spacing:0.036px;">bilal pc new</div>
<div class="t" style="left:24.90px;top:40.00px;font-size:12.9px;font-weight:400;color:#9ea0b4;letter-spacing:0.131px;transform:scaleX(1.1300);transform-origin:0 50%;-webkit-text-stroke:0.3px currentColor;">Add pc</div>
<div class="t" style="left:24.90px;top:69.00px;font-size:12.9px;font-weight:400;color:#9ea0b4;letter-spacing:0.000px;transform:scaleX(1.0933);transform-origin:0 50%;-webkit-text-stroke:0.3px currentColor;">Edit pc</div>
<div class="t" style="left:24.90px;top:97.00px;font-size:12.9px;font-weight:400;color:#9ea0b4;letter-spacing:0.000px;transform:scaleX(1.1217);transform-origin:0 50%;-webkit-text-stroke:0.3px currentColor;">Delete pc</div>
<div class="t" style="left:24.90px;top:125.00px;font-size:12.9px;font-weight:400;color:#9ea0b4;letter-spacing:0.000px;transform:scaleX(1.0835);transform-origin:0 50%;-webkit-text-stroke:0.3px currentColor;">Power</div>
<div class="t" style="left:24.90px;top:153.00px;font-size:12.9px;font-weight:400;color:#9ea0b4;letter-spacing:0.000px;transform:scaleX(1.1279);transform-origin:0 50%;-webkit-text-stroke:0.3px currentColor;">Remote control</div>
<div class="t" style="left:24.90px;top:191.00px;font-size:12.9px;font-weight:400;color:#9ea0b4;letter-spacing:0.041px;transform:scaleX(1.1300);transform-origin:0 50%;-webkit-text-stroke:0.3px currentColor;">Keep write-back</div>
<div class="t" style="left:24.90px;top:219.00px;font-size:12.9px;font-weight:400;color:#9ea0b4;letter-spacing:0.000px;transform:scaleX(1.1045);transform-origin:0 50%;-webkit-text-stroke:0.3px currentColor;">Enable super client</div>
<div class="t" style="left:24.90px;top:247.00px;font-size:12.9px;font-weight:400;color:#6d6f86;letter-spacing:0.000px;transform:scaleX(1.1120);transform-origin:0 50%;-webkit-text-stroke:0.3px currentColor;">Disable super client</div>
<div class="t" style="left:24.90px;top:285.00px;font-size:12.9px;font-weight:400;color:#9ea0b4;letter-spacing:0.000px;transform:scaleX(1.0926);transform-origin:0 50%;-webkit-text-stroke:0.3px currentColor;">Reset width</div>
</div>
<div id="fab"></div>
<svg width="1920" height="963" viewBox="0 0 1920 963" style="left:0;top:0;pointer-events:none"><path d="M1103.9 309.7V325.7L1107.5 322.4L1109.9 327.8L1112.1 326.8L1109.8 321.5L1114.7 321.3Z" fill="#ffffff" stroke="#05050a" stroke-width="1.15" stroke-linejoin="miter"/><path d="M1922 880.6L1914.2 889L1922 897.4" fill="none" stroke="#b9b9b9" stroke-width="2.8"/></svg>
</body>
</html>
